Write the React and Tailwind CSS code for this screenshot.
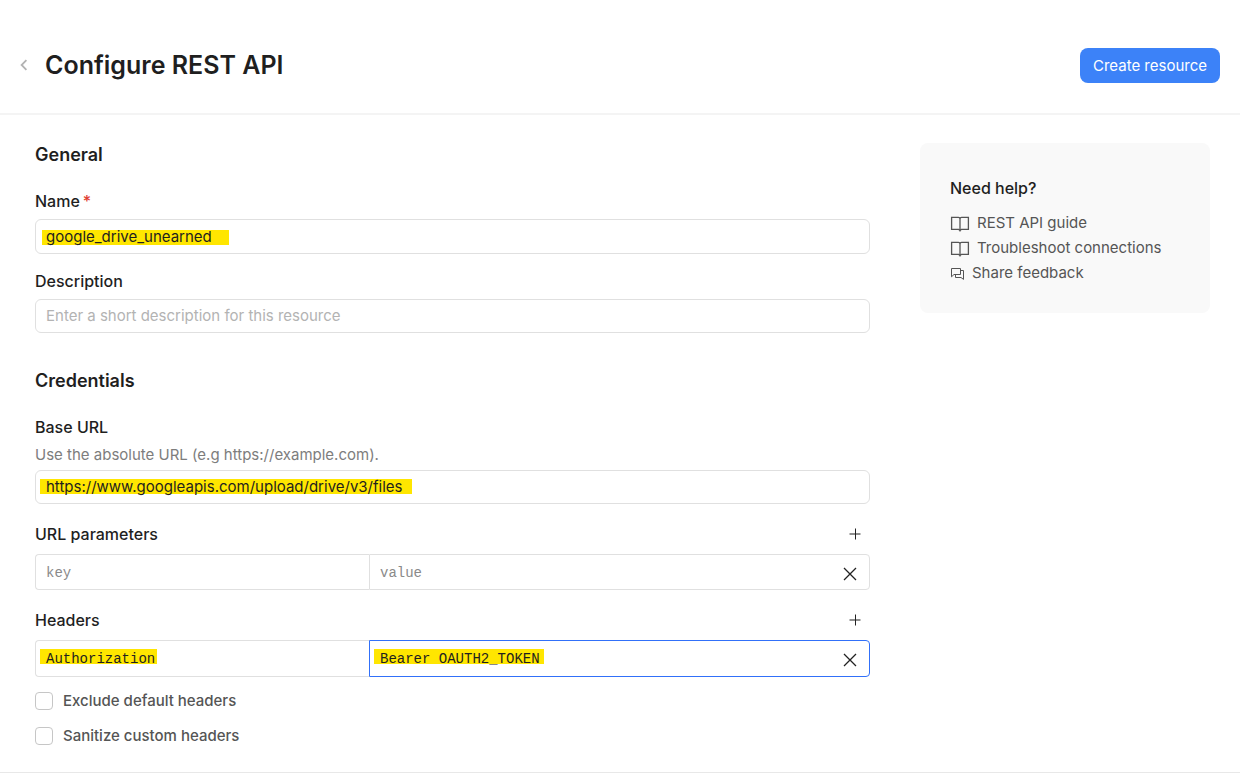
import React from "react";

const inputBase =
  "block w-full rounded-md border border-[#e0e0e0] px-2.5 text-[15px] leading-5 text-[#1f1f1f] placeholder:text-[#b3b3b3] outline-none bg-no-repeat";
const cellBase =
  "block h-full w-full min-w-0 px-2.5 pt-px font-['Liberation_Mono',monospace] text-sm leading-5 text-[#1f1f1f] placeholder:text-[#8a8a8a] outline-none bg-no-repeat";

function BookIcon() {
  return (
    <svg width="20" height="16" viewBox="0 0 20 16" fill="none" stroke="#555" strokeWidth="1.3" aria-hidden="true">
      <path d="M10 3 Q10 1.4 8.4 1.4 H1.6 V13.3 H8.6 L10 14.7 L11.4 13.3 H18.4 V1.4 H11.6 Q10 1.4 10 3 V15.6" />
    </svg>
  );
}

function ChatIcon() {
  return (
    <svg width="15" height="14" viewBox="0 0 15 14" fill="none" stroke="#555" strokeWidth="1" aria-hidden="true">
      <path d="M1.5 1.5 H10.5 V7.5 H4 L1.5 9.8 Z" />
      <path d="M10.5 3.5 H13.5 V12.4 L11 10.5 H5.5 V7.5" />
    </svg>
  );
}

function AddButton({ label }) {
  return (
    <button type="button" aria-label={label} className="flex size-6 items-center justify-center">
      <svg width="12" height="12" viewBox="0 0 12 12" fill="none" aria-hidden="true">
        <path d="M0.5 6 H11.5" stroke="#333" strokeWidth="1.1" />
        <path d="M6.5 0.5 V11.5" stroke="#222" strokeWidth="1" />
      </svg>
    </button>
  );
}

function RemoveButton({ label }) {
  return (
    <button type="button" aria-label={label} className="flex w-[38px] shrink-0 items-center justify-center pt-[3px]">
      <svg width="14" height="14" viewBox="0 0 14 14" fill="none" stroke="#222" strokeWidth="1.3" aria-hidden="true">
        <path d="M1 1 L13 13 M13 1 L1 13" />
      </svg>
    </button>
  );
}

function HelpLink({ icon, children }) {
  return (
    <a href="#" className="flex h-[25px] items-center gap-[7px] text-[15px] text-[#555]">
      {icon}
      {children}
    </a>
  );
}

function CheckRow({ label }) {
  return (
    <label className="flex items-center gap-2.5 text-[15px] font-medium leading-5 text-[#555]">
      <input type="checkbox" className="size-[18px] appearance-none rounded border border-[#c6c6c6] bg-white" />
      {label}
    </label>
  );
}

export default function App() {
  return (
    <div className="min-h-screen bg-white font-[Inter,sans-serif] text-[#1f1f1f]">
      <header className="flex items-center justify-between border-b-2 border-[#f4f4f4] px-5 pt-12 pb-[30px]">
        <div className="flex items-center gap-4 pb-0.5">
          <button type="button" aria-label="Back" className="flex h-6 w-[9px] items-center">
            <svg width="9" height="12" viewBox="0 0 9 12" fill="none" stroke="#b3b3b3" strokeWidth="1.8" aria-hidden="true">
              <path d="M6.4 1.2 L1.6 6 L6.4 10.8" />
            </svg>
          </button>
          <h1 className="text-[25px] font-semibold leading-8">Configure REST API</h1>
        </div>
        <button type="button" className="h-[35px] rounded-lg bg-[#3c82f8] px-[13px] pt-px text-[15px] text-white">
          Create resource
        </button>
      </header>

      <main className="flex items-start gap-[50px] border-b border-[#e8e8e8] pt-7 pr-[30px] pb-[26px] pl-[35px]">
        <form className="min-w-0 flex-1">
          <section>
            <h2 className="text-lg font-semibold leading-6">General</h2>
            <label htmlFor="name" className="mt-[22px] mb-1.5 block text-base font-medium leading-6">
              Name<span className="ml-[3px] text-[#e03c31]">*</span>
            </label>
            <input
              id="name"
              defaultValue="google_drive_unearned"
              className={`${inputBase} h-[35px] bg-[linear-gradient(#ffe600,#ffe600)] bg-[length:187px_15px] bg-[position:6px_10px]`}
            />
            <label htmlFor="description" className="mt-[15px] mb-1.5 block text-base font-medium leading-6">
              Description
            </label>
            <input
              id="description"
              placeholder="Enter a short description for this resource"
              className={`${inputBase} h-[34px] pb-0.5`}
            />
          </section>

          <section className="mt-9">
            <h2 className="text-lg font-semibold leading-6">Credentials</h2>
            <label htmlFor="base-url" className="mt-[22px] block text-base font-medium leading-6">
              Base URL
            </label>
            <p className="mt-1 mb-[3px] text-[15px] leading-6 text-[#7d7d7d]">Use the absolute URL (e.g https://example.com).</p>
            <input
              id="base-url"
              defaultValue="https://www.googleapis.com/upload/drive/v3/files"
              className={`${inputBase} h-[34px] pb-0.5 bg-[linear-gradient(#ffe600,#ffe600)] bg-[length:372px_15px] bg-[position:4px_8px]`}
            />

            <div className="mt-[18px] mb-2 flex items-center justify-between pr-[3px]">
              <h3 className="text-base font-medium leading-6">URL parameters</h3>
              <AddButton label="Add URL parameter" />
            </div>
            <div className="flex h-9">
              <div className="w-2/5 rounded-l border border-r-0 border-[#e0e0e0]">
                <input aria-label="URL parameter key" placeholder="key" className={cellBase} />
              </div>
              <div className="flex w-3/5 rounded-r border border-[#e0e0e0]">
                <input aria-label="URL parameter value" placeholder="value" className={cellBase} />
                <RemoveButton label="Remove URL parameter" />
              </div>
            </div>

            <div className="mt-[18px] mb-2 flex items-center justify-between pr-[3px]">
              <h3 className="text-base font-medium leading-6">Headers</h3>
              <AddButton label="Add header" />
            </div>
            <div className="flex h-[37px]">
              <div className="w-2/5 rounded-l border border-r-0 border-[#e0e0e0]">
                <input
                  aria-label="Header key"
                  defaultValue="Authorization"
                  className={`${cellBase} bg-[linear-gradient(#ffe600,#ffe600)] bg-[length:117px_15px] bg-[position:4px_8px]`}
                />
              </div>
              <div className="flex w-3/5 rounded-r border border-[#3170f9]">
                <input
                  aria-label="Header value"
                  defaultValue="Bearer OAUTH2_TOKEN"
                  className={`${cellBase} bg-[linear-gradient(#ffe600,#ffe600)] bg-[length:170px_15px] bg-[position:4px_8px]`}
                />
                <RemoveButton label="Remove header" />
              </div>
            </div>

            <div className="mt-3.5 flex flex-col gap-[15px]">
              <CheckRow label="Exclude default headers" />
              <CheckRow label="Sanitize custom headers" />
            </div>
          </section>
        </form>

        <aside className="w-[290px] shrink-0 rounded-lg bg-[#f9f9f9] px-[30px] pt-[33px] pb-[27px]">
          <h2 className="text-base font-medium leading-6">Need help?</h2>
          <nav className="mt-[11px]">
            <HelpLink icon={<BookIcon />}>REST API guide</HelpLink>
            <HelpLink icon={<BookIcon />}>Troubleshoot connections</HelpLink>
            <HelpLink icon={<ChatIcon />}>Share feedback</HelpLink>
          </nav>
        </aside>
      </main>
    </div>
  );
}
